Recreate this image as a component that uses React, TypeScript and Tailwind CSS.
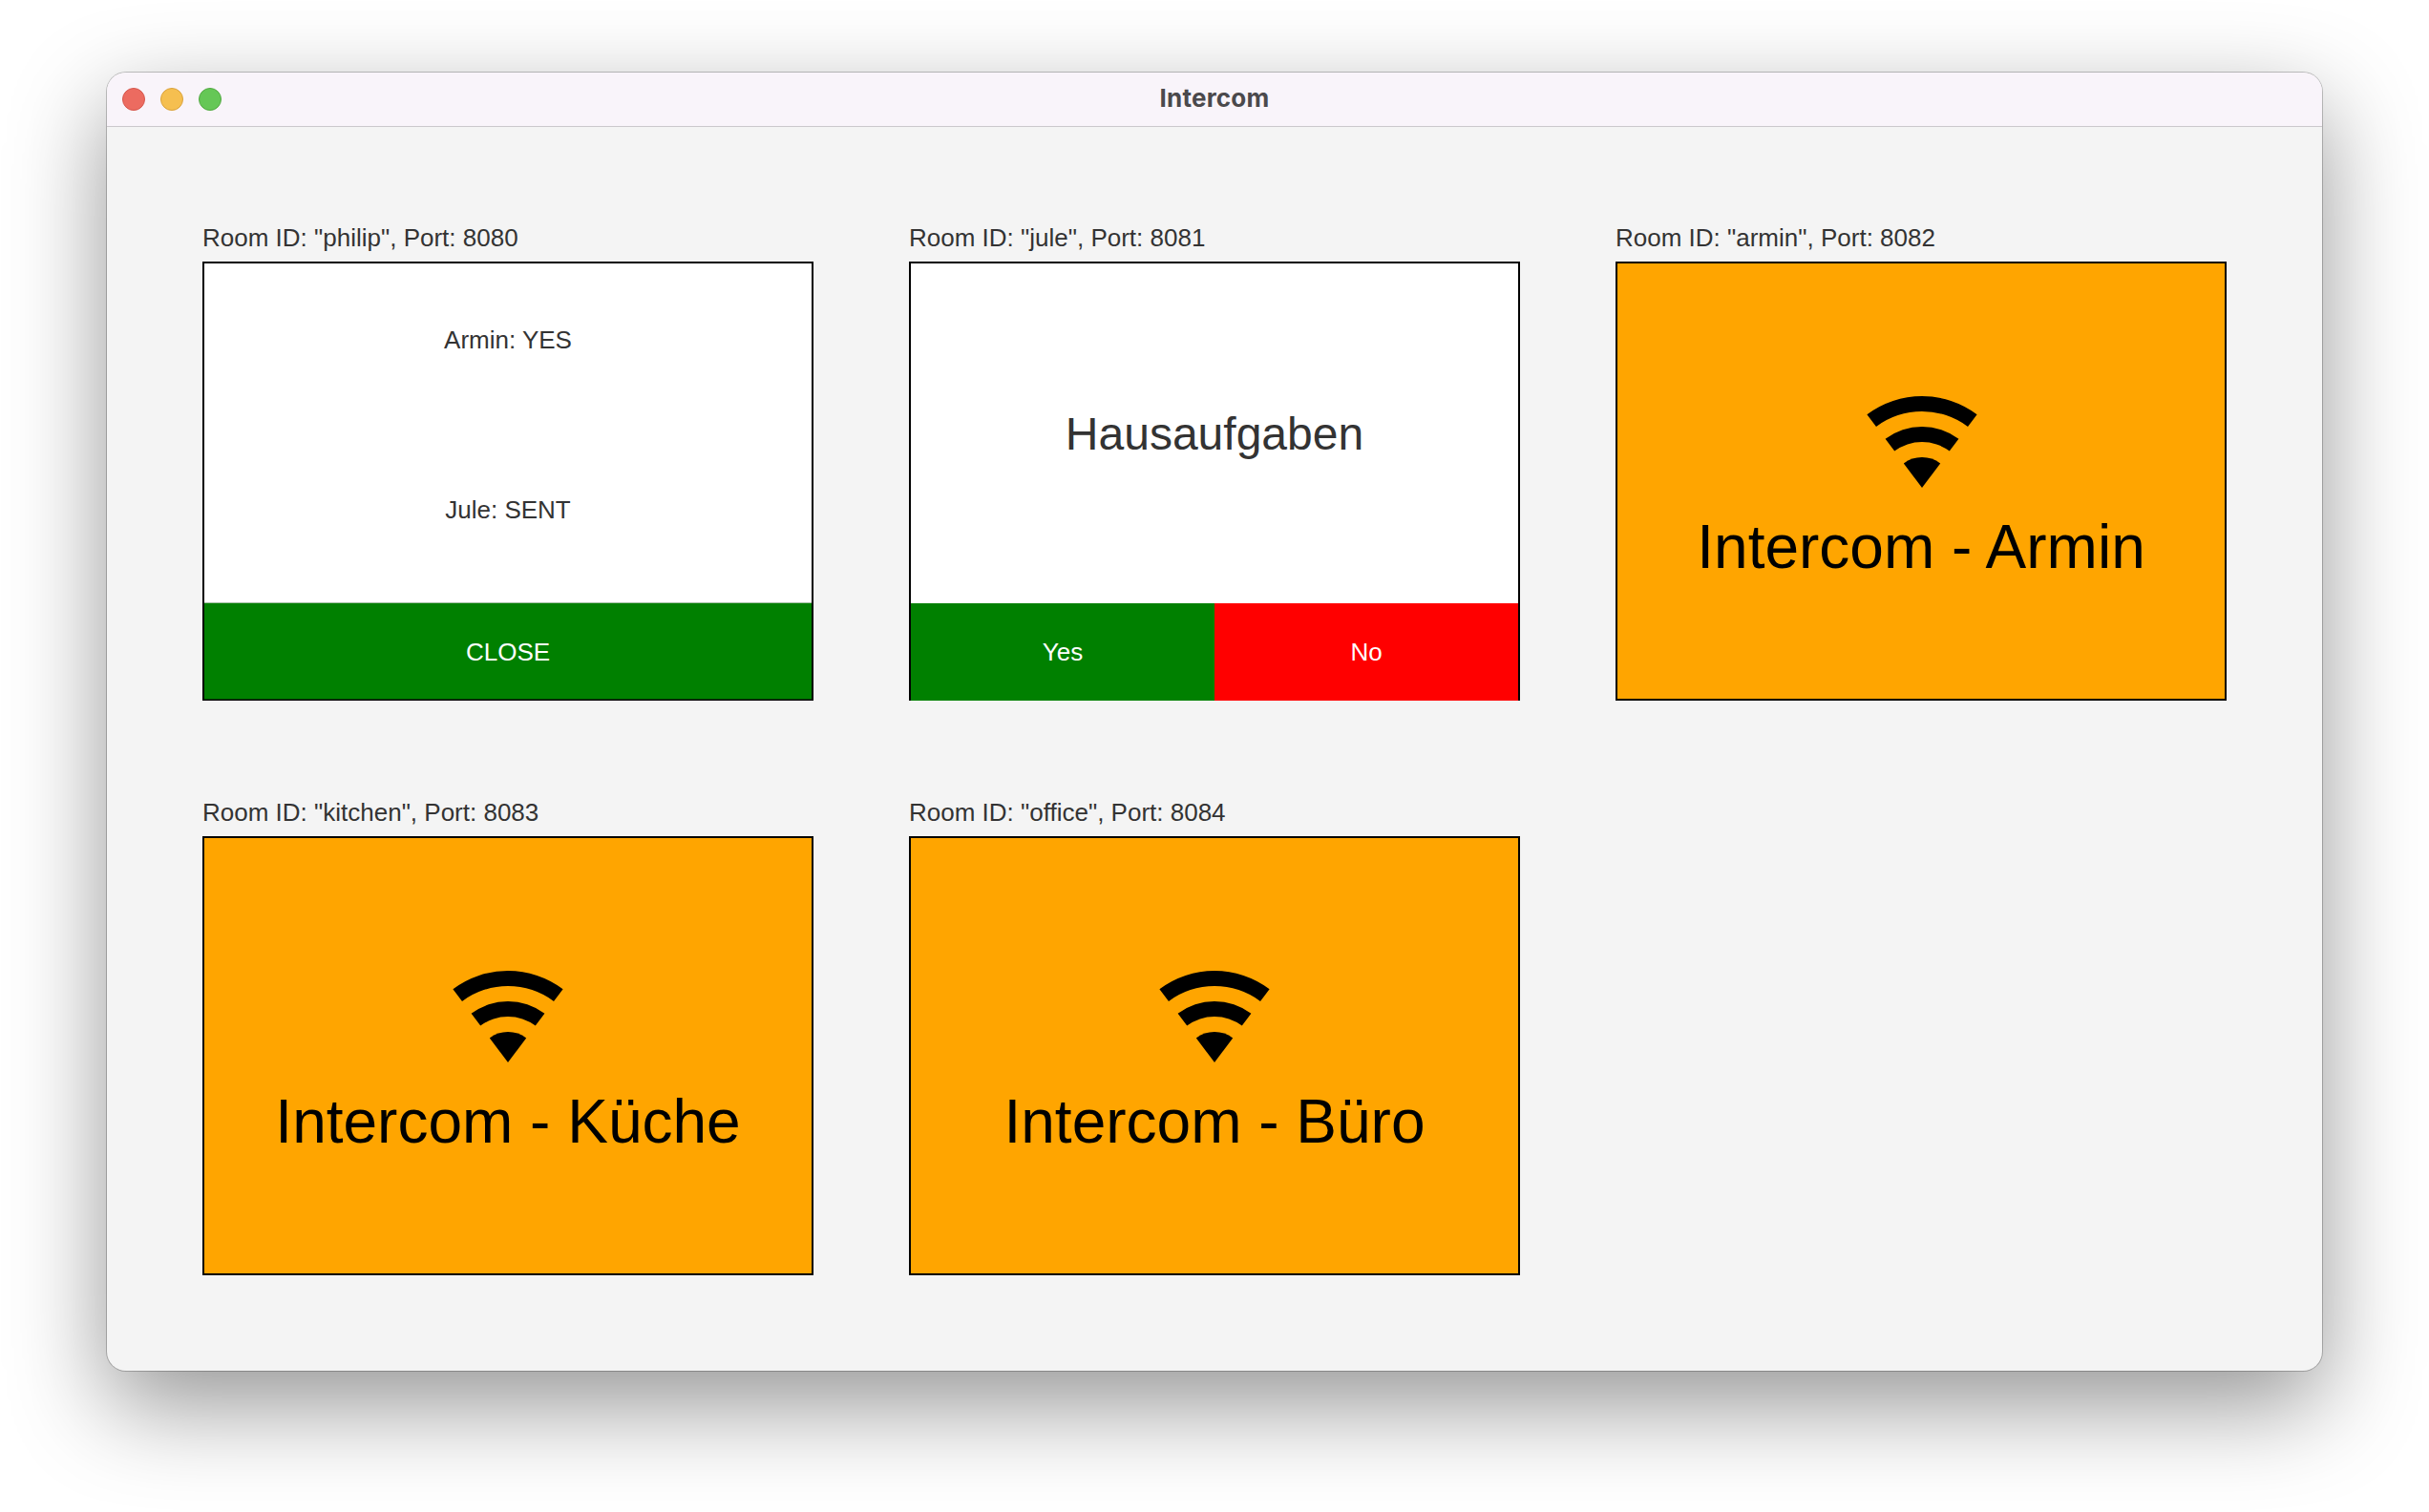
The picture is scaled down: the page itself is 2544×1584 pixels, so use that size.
import type { ReactNode } from "react";

function WifiIcon({ className = "" }: { className?: string }) {
  return (
    <svg width="118" height="96" viewBox="-59 -96 118 96" className={`block ${className}`} fill="#000">
      <path d="M-57.6-76.8A96 96 0 0 1 57.6-76.8L48-64A80 80 0 0 0-48-64Z" />
      <path d="M-38.4-51.2A64 64 0 0 1 38.4-51.2L28.8-38.4A48 48 0 0 0-28.8-38.4Z" />
      <path d="M-19.2-25.6A32 32 0 0 1 19.2-25.6L0 0Z" />
    </svg>
  );
}

function Room({ id, port, children }: { id: string; port: number; children: ReactNode }) {
  return (
    <section className="flex w-[640px] flex-col">
      <h2 className="mb-[10px] h-[30px] whitespace-nowrap text-[26px] leading-[30px]">
        {`Room ID: "${id}", Port: ${port}`}
      </h2>
      {children}
    </section>
  );
}

function IdleScreen({ name, iconClass }: { name: string; iconClass?: string }) {
  return (
    <div className="flex h-[460px] flex-col items-center border-2 border-black bg-[#ffa500] pt-[139px] text-black">
      <WifiIcon className={iconClass} />
      <p className="mt-[25px] whitespace-nowrap text-[64px] leading-[74px]">Intercom - {name}</p>
    </div>
  );
}

export default function App() {
  return (
    <div className="h-[1584px] w-[2544px] overflow-hidden bg-white px-28 pt-[76px] font-['Liberation_Sans',Arial,sans-serif] text-[#333]">
      <main className="h-[1360px] w-[2320px] overflow-hidden rounded-[20px] bg-[#f4f4f4] shadow-[0_0_0_1px_rgba(0,0,0,0.22),0_36px_100px_rgba(0,0,0,0.42)]">
        <header className="grid h-[57px] grid-cols-3 items-center border-b border-[#cbc8cc] bg-[#f9f4fa] px-4">
          <div className="flex gap-4">
            <span className="size-6 rounded-full border border-[#d5574d] bg-[#ec6b60]" />
            <span className="size-6 rounded-full border border-[#d9a23c] bg-[#f5bf50]" />
            <span className="size-6 rounded-full border border-[#52a842] bg-[#65c756]" />
          </div>
          <h1 className="pb-[3px] text-center text-[26px] leading-8 font-bold tracking-[0.2px] text-[#4b494c] [font-family:Inter,sans-serif]">
            Intercom
          </h1>
        </header>
        <div className="grid grid-cols-[640px_640px_640px] gap-x-[100px] gap-y-[102px] px-[100px] pt-[101px]">
          <Room id="philip" port={8080}>
            <div className="flex h-[460px] flex-col border-2 border-b border-black bg-white text-[26px] leading-[30px]">
              <div className="grid flex-1 grid-rows-2 place-items-center pb-[18px]">
                <p className="-mt-[9px]">Armin: YES</p>
                <p className="mt-[11px]">Jule: SENT</p>
              </div>
              <button className="h-[102px] border-y border-t-[#9fbf9f] border-b-[#003c00] bg-[#008000] pt-px text-white">
                CLOSE
              </button>
            </div>
          </Room>
          <Room id="jule" port={8081}>
            <div className="flex h-[460px] flex-col border-2 border-b-0 border-black bg-white">
              <p className="flex flex-1 items-center justify-center pt-[2px] text-[48px] leading-[56px]">Hausaufgaben</p>
              <div className="grid h-[102px] grid-cols-2 text-[26px] leading-[30px] text-white">
                <button className="bg-[#008000]">Yes</button>
                <button className="bg-[#ff0000]">No</button>
              </div>
            </div>
          </Room>
          <Room id="armin" port={8082}>
            <IdleScreen name="Armin" iconClass="ml-0.5" />
          </Room>
          <Room id="kitchen" port={8083}>
            <IdleScreen name="Küche" />
          </Room>
          <Room id="office" port={8084}>
            <IdleScreen name="Büro" />
          </Room>
        </div>
      </main>
    </div>
  );
}
